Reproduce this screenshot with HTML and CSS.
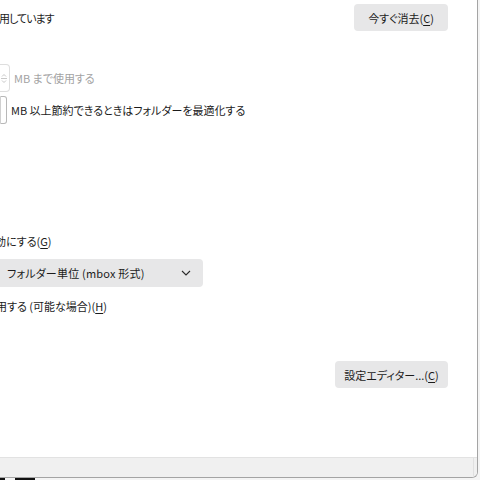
FILE: index.html
```html
<!DOCTYPE html>
<html lang="ja">
<head>
<meta charset="utf-8">
<title>設定</title>
<link rel="stylesheet" href="styles.css">
</head>
<body>
<div class="screen">
  <div class="window">
    <div class="content">
      <div class="row row-top">
        <span class="label cut-a">用しています</span>
        <button class="btn">今すぐ消去(<u>C</u>)</button>
      </div>
      <div class="row row-spin row-spin-a is-disabled">
        <span class="spin spin-a">
          <svg class="spin-arrows" width="8" height="14" viewBox="0 0 8 14"><path d="M2 5.5 L4 3.5 L6 5.5 M1 7.5 H7 M2 9.5 L4 11.5 L6 9.5" fill="none" stroke="#c8c8c8" stroke-width="1"/></svg>
        </span>
        <span class="label">MB まで使用する</span>
      </div>
      <div class="row row-spin row-spin-b">
        <span class="spin spin-b"></span>
        <span class="label">MB 以上節約できるときはフォルダーを最適化する</span>
      </div>
      <div class="row row-check row-check-a">
        <span class="label cut-b">効にする(<u>G</u>)</span>
      </div>
      <div class="row row-select">
        <div class="select">
          <span class="select-text">フォルダー単位 (mbox 形式)</span>
          <svg class="chevron" width="10" height="6" viewBox="0 0 10 6"><path d="M1 1 L5 5 L9 1" fill="none" stroke="#2a2a2a" stroke-width="1.1"/></svg>
        </div>
      </div>
      <div class="row row-check row-check-b">
        <span class="label cut-c">用する (可能な場合)(<u>H</u>)</span>
      </div>
      <div class="row row-end">
        <button class="btn btn-wide">設定エディター...(<u>C</u>)</button>
      </div>
    </div>
    <div class="footer"><span class="footer-edge"></span></div>
  </div>
  <div class="taskbar"><span class="tb tb-a"></span><span class="tb tb-b"></span></div>
</div>
</body>
</html>
```
FILE: styles.css
```css
* { box-sizing: border-box; }
html, body { margin: 0; padding: 0; }
body {
  width: 480px;
  height: 480px;
  overflow: hidden;
  background: #f4f4f4;
  font-family: "Noto Sans CJK JP", "Noto Sans", sans-serif;
  font-size: 11px;
  font-feature-settings: "palt";
  color: #1b1b1b;
}
.screen {
  width: 480px;
  height: 480px;
  display: flex;
  flex-direction: column;
}
.window {
  width: 478px;
  height: 478px;
  background: #fff;
  border-right: 1px solid #a4a4a4;
  border-bottom: 1px solid #a4a4a4;
  border-bottom-right-radius: 6px;
  display: flex;
  flex-direction: column;
  overflow: hidden;
}
.content {
  height: 457px;
  display: flex;
  flex-direction: column;
  padding-right: 29px;
  overflow: hidden;
}
.row {
  display: flex;
  align-items: center;
  white-space: nowrap;
}
.row-top { margin-top: 4px; height: 27px; justify-content: space-between; }
.row-spin { height: 28px; }
.row-spin-a { margin-top: 33px; }
.row-spin-b { margin-top: 4px; }
.row-check { height: 20px; }
.row-check-a { margin-top: 107px; }
.row-select { margin-top: 8px; }
.row-check-b { margin-top: 9px; }
.row-end { margin-top: 45px; justify-content: flex-end; }

.label { line-height: 20px; }
.cut-a { margin-left: -1px; letter-spacing: -1px; }
.cut-b { margin-left: -5px; }
.cut-c { margin-left: -4px; }
.is-disabled .label { color: #a3a3a3; }

.select-text { letter-spacing: 0.2px; }

.btn {
  font: inherit;
  font-feature-settings: "palt";
  color: #1b1b1b;
  background: #e7e7e8;
  border: none;
  border-radius: 4px;
  height: 27px;
  width: 94px;
  padding: 0;
  display: flex;
  align-items: center;
  justify-content: center;
}
.btn-wide { width: 113px; }
u { text-underline-offset: 2px; }

.spin {
  height: 28px;
  border-radius: 0 4px 4px 0;
  display: flex;
  align-items: center;
  justify-content: flex-end;
}
.spin-a {
  width: 10px;
  margin-right: 4px;
  border: 1px solid #dedede;
  border-left: none;
  padding-right: 1px;
}
.spin-arrows { display: block; }
.spin-b {
  width: 7px;
  margin-right: 4px;
  border: 1px solid #b8b8b8;
  border-left: 1px solid #d0d0d0;
  border-radius: 0 3px 3px 0;
}

.select {
  margin-left: -10px;
  width: 213px;
  height: 28px;
  background: #e7e7e8;
  border-radius: 4px;
  display: flex;
  align-items: center;
  justify-content: space-between;
  padding: 0 12px 0 17px;
}
.chevron { display: block; }

.footer {
  flex: 1;
  background: #f0f0f0;
  border-top: 1px solid #e2e2e2;
  display: flex;
  justify-content: flex-end;
  padding-right: 3px;
}
.footer-edge {
  width: 1px;
  background: #e0e0e0;
  border-bottom-right-radius: 3px;
}
.taskbar {
  flex: 1;
  display: flex;
  gap: 10px;
}
.tb { background: #111; height: 2px; }
.tb-a { width: 5px; }
.tb-b { width: 20px; }
```
